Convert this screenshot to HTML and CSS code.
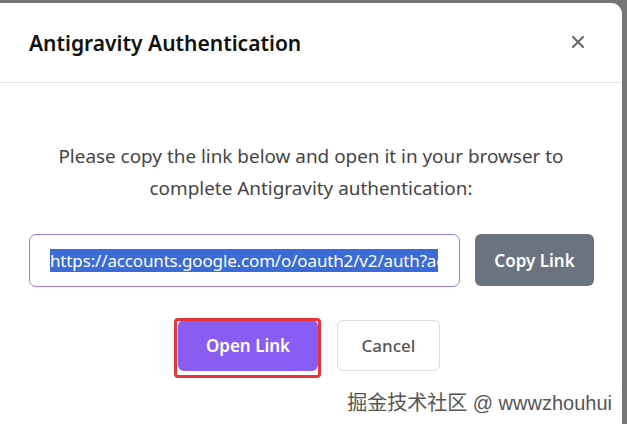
FILE: index.html
```html
<!DOCTYPE html>
<html>
<head>
<meta charset="utf-8">
<link rel="stylesheet" href="styles.css">
</head>
<body>
<div class="dialog">
  <div class="header">
    <h2 class="title">Antigravity Authentication</h2>
    <svg class="close" width="12" height="12" viewBox="0 0 12 12"><path d="M1 1L11 11M11 1L1 11" stroke="#666" stroke-width="2" stroke-linecap="round"/></svg>
  </div>
  <div class="body">
    <p class="msg">Please copy the link below and open it in your browser to complete Antigravity authentication:</p>
    <div class="link-row">
      <div class="link-input"><div class="clip"><span class="sel">https://accounts.google.com/o/oauth2/v2/auth?acc</span></div></div>
      <button class="btn btn-copy">Copy Link</button>
    </div>
    <div class="actions">
      <button class="btn btn-open">Open Link</button>
      <button class="btn btn-cancel">Cancel</button>
    </div>
  </div>
  <div class="watermark">掘金技术社区 @ wwwzhouhui</div>
</div>
</body>
</html>
```
FILE: styles.css
```css
html, body {
  margin: 0;
  padding: 0;
  background: #767676;
  height: 424px;
  overflow: hidden;
}
body {
  font-family: "Noto Sans", "Open Sans", sans-serif;
}
.dialog {
  position: relative;
  margin-top: 3px;
  width: 622px;
  height: 421px;
  background: #fff;
  border-radius: 0 11px 0 0;
  box-sizing: border-box;
}
.header {
  height: 80px;
  display: flex;
  align-items: center;
  justify-content: space-between;
  padding: 0 38px 0 29px;
  border-bottom: 1px solid #e3e3e3;
  box-sizing: border-box;
}
.title {
  margin: 0;
  font-size: 21px;
  font-weight: 600;
  color: #111;
}
.close {
  display: block;
  margin-top: -2px;
}
.body {
  padding-top: 57px;
}
.msg {
  margin: 0 auto;
  width: 530px;
  text-align: center;
  font-size: 18.9px;
  line-height: 32px;
  color: #454545;
}
.link-row {
  display: flex;
  gap: 15px;
  margin-top: 30px;
  padding-left: 29px;
}
.link-input {
  width: 431px;
  height: 53px;
  box-sizing: border-box;
  border: 1px solid #9a80d6;
  border-radius: 7px;
  padding: 0 0 0 20px;
  display: flex;
  align-items: center;
  font-size: 17px;
}
.clip {
  width: 388px;
  overflow: hidden;
  white-space: nowrap;
  display: flex;
}
.sel {
  background: #3a6bd6;
  color: #fff;
  line-height: 23px;
  letter-spacing: -0.15px;
}
.btn {
  font-family: inherit;
  font-size: 17px;
  font-weight: 600;
  border-radius: 6px;
  cursor: pointer;
}
.btn-copy {
  width: 119px;
  height: 52px;
  background: #6b7280;
  color: #fff;
  border: none;
}
.actions {
  display: flex;
  justify-content: center;
  gap: 19px;
  margin-top: 33px;
  padding-right: 4px;
}
.btn-open {
  position: relative;
  width: 140px;
  height: 51px;
  border: none;
  color: #fff;
  background: linear-gradient(90deg, #8a5cf0, #8b5cf6);
}
.btn-open::after {
  content: "";
  position: absolute;
  top: -2px;
  left: -4px;
  right: -3px;
  bottom: -7px;
  border: 3px solid #e8333b;
  border-radius: 4px;
}
.btn-cancel {
  width: 103px;
  height: 51px;
  background: #fff;
  color: #555;
  border: 1px solid #dcdcdc;
  font-weight: 500;
}
.watermark {
  position: absolute;
  right: 10px;
  bottom: 8px;
  font-family: "Liberation Sans", "Noto Sans CJK SC", sans-serif;
  font-size: 20px;
  color: #555;
  text-shadow: 0 0 2px #fff;
}
```
